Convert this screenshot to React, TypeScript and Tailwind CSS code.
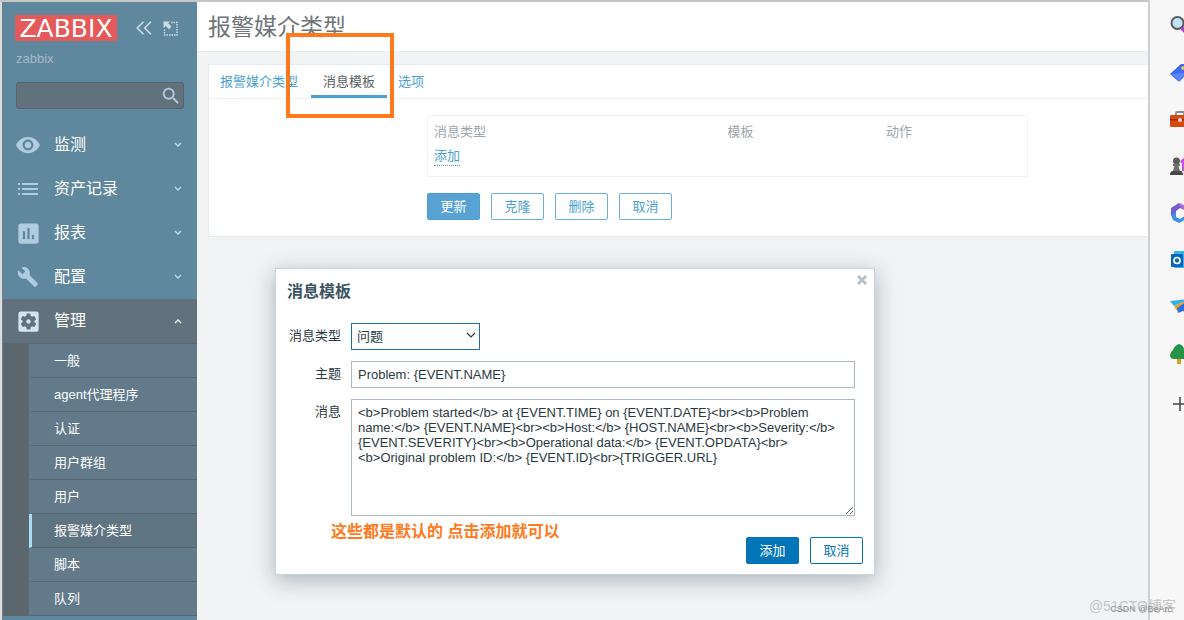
import type { ReactNode } from "react";
import {
  MdAssessment,
  MdBuild,
  MdSearch,
  MdSettingsApplications,
  MdVisibility,
} from "react-icons/md";

const ListIcon = () => (
  <svg width="20" height="12" viewBox="0 0 20 12" fill="currentColor">
    <path d="M0 0h2v2H0zM4 0h16v2H4zM0 5h2v2H0zM4 5h16v2H4zM0 10h2v2H0zM4 10h16v2H4z" />
  </svg>
);

const Chevron = ({ up = false }: { up?: boolean }) => (
  <svg
    width="8"
    height="6"
    viewBox="0 0 8 6"
    fill="none"
    stroke="currentColor"
    strokeWidth="1.3"
  >
    <path d={up ? "M1 5l3-3 3 3" : "M1 1l3 3 3-3"} />
  </svg>
);

const menu = [
  { label: "监测", icon: <MdVisibility size={26} /> },
  { label: "资产记录", icon: <ListIcon /> },
  { label: "报表", icon: <MdAssessment size={27} /> },
  { label: "配置", icon: <MdBuild size={22} /> },
];

const subMenu = [
  "一般",
  "agent代理程序",
  "认证",
  "用户群组",
  "用户",
  "报警媒介类型",
  "脚本",
  "队列",
];

const MenuButton = ({
  label,
  icon,
  open = false,
}: {
  label: string;
  icon: ReactNode;
  open?: boolean;
}) => (
  <button
    aria-expanded={open}
    className={`flex h-11 w-full items-center pr-[15px] pl-[11px] text-base text-white ${
      open ? "bg-[#61727d]" : ""
    }`}
  >
    <span
      className={`flex w-7 justify-center ${
        open ? "text-[#d3e5f1]" : "text-[#b0cde0]"
      }`}
    >
      {icon}
    </span>
    <span className="ml-3 flex-1 text-left">{label}</span>
    <span className={open ? "text-white" : "text-[#c5dae8]"}>
      <Chevron up={open} />
    </span>
  </button>
);

const Sidebar = () => (
  <aside className="w-[195px] shrink-0 border-l border-[#6b7f8a] bg-[#5f879d]">
    <div className="flex items-center px-3 pt-[13px] pr-[19px]">
      <a
        href="#"
        className="flex h-[26px] w-[102px] items-center justify-center bg-[#e45959] font-['DejaVu_Sans'] text-[25px] leading-none text-white"
      >
        ZABBIX
      </a>
      <button aria-label="收起" className="ml-auto text-[#c9dde9]">
        <svg
          width="16"
          height="14"
          viewBox="0 0 16 14"
          fill="none"
          stroke="currentColor"
          strokeWidth="1.6"
        >
          <path d="M7.500 .8L1.200 7l6.300 6.200M15 .8L8.700 7l6.300 6.200" />
        </svg>
      </button>
      <button aria-label="隐藏" className="ml-[11px] text-[#c9dde9]">
        <svg width="15" height="15" viewBox="0 0 15 15" fill="none">
          <path
            d="M8 1.500h6v12.500H1.500V8"
            stroke="currentColor"
            strokeWidth="1.400"
            strokeDasharray="1.500 1"
          />
          <path
            d="M.5 .5h6.500L5.200 2.300l3.300 3.300-2.600 2.600-3.300-3.300L.5 7z"
            fill="currentColor"
          />
        </svg>
      </button>
    </div>
    <p className="mt-[9px] px-[13px] text-[13px] leading-[18px] text-[#a3bac7]">
      zabbix
    </p>
    <form className="mx-[13px] mt-[14px] flex h-[27px] items-center rounded-[3px] border border-[#566570] bg-[#61727d] pr-px">
      <input aria-label="搜索" className="h-full min-w-0 flex-1 px-2 text-white" />
      <button type="button" aria-label="搜索" className="text-[#b0cde0]">
        <MdSearch size={22} />
      </button>
    </form>
    <nav className="mt-[14px]">
      {menu.map((m) => (
        <MenuButton key={m.label} label={m.label} icon={m.icon} />
      ))}
      <MenuButton
        label="管理"
        icon={<MdSettingsApplications size={27} />}
        open
      />
      <ul className="border-t border-[#596a76] bg-[#5b666d] pl-[26px] text-[13px] text-white">
        {subMenu.map((s) => (
          <li key={s}>
            <a
              href="#"
              className={`flex h-[34px] items-center border-b border-l-3 border-b-[#566772] pl-[22px] ${
                s === "报警媒介类型"
                  ? "border-l-[#a9dcf7] bg-[#5f7481]"
                  : "border-l-[#627a8a] bg-[#627a8a]"
              }`}
            >
              {s}
            </a>
          </li>
        ))}
      </ul>
    </nav>
  </aside>
);

const buttonBase =
  "h-[27px] min-w-[53px] rounded-[2px] border px-3 text-[13px] leading-none";

const MediaTypes = () => (
  <main className="min-w-0 flex-1 bg-[#f1f3f5]">
    <header className="h-[50px] border-b border-[#e6ebee] bg-white pl-[11px]">
      <h1 className="text-[23px] leading-[51px] text-[#6e7478]">
        报警媒介类型
      </h1>
    </header>
    <section className="mt-3 ml-[11px] border border-r-0 border-[#e6ebee] bg-white pb-4">
      <div className="flex h-[34px] items-stretch gap-px border-b border-[#eef1f3] text-[13px] text-[#4c9fd2]">
        <button className="pr-3 pl-[11px]">报警媒介类型</button>
        <button className="border-b-3 border-[#4c9fd2] px-3 pt-[3px] text-[#5b6064]">
          消息模板
        </button>
        <button className="px-[10px]">选项</button>
      </div>
      <div className="mt-4 ml-[218px] max-w-[601px]">
        <div className="border border-[#f0f2f3] px-[6px] pt-1 pb-2">
          <table className="w-full table-fixed text-left text-[13px]">
            <thead>
              <tr className="h-6 text-[#9ba6ad]">
                <th className="w-1/2 font-normal">消息类型</th>
                <th className="w-[27%] font-normal">模板</th>
                <th className="font-normal">动作</th>
              </tr>
            </thead>
            <tbody>
              <tr className="h-6">
                <td colSpan={3}>
                  <button className="border-b border-dotted border-[#4c9fd2] leading-[18px] text-[#4c9fd2]">
                    添加
                  </button>
                </td>
              </tr>
            </tbody>
          </table>
        </div>
        <div className="mt-4 flex gap-[11px]">
          <button
            className={`${buttonBase} border-[#4c9fd2] bg-[#58a3d3] text-white`}
          >
            更新
          </button>
          {["克隆", "删除", "取消"].map((b) => (
            <button
              key={b}
              className={`${buttonBase} border-[#6aaed8] bg-white text-[#4c9fd2]`}
            >
              {b}
            </button>
          ))}
        </div>
      </div>
    </section>
  </main>
);

const message =
  "<b>Problem started</b> at {EVENT.TIME} on {EVENT.DATE}<br><b>Problem name:</b> {EVENT.NAME}<br><b>Host:</b> {HOST.NAME}<br><b>Severity:</b> {EVENT.SEVERITY}<br><b>Operational data:</b> {EVENT.OPDATA}<br><b>Original problem ID:</b> {EVENT.ID}<br>{TRIGGER.URL}";

const TemplateDialog = () => (
  <div
    role="dialog"
    aria-labelledby="dialog-title"
    className="relative w-[600px] border border-[#c9d3d8] bg-white px-[11px] pt-[11px] pb-[10px] text-[#2b3a42] shadow-[0_5px_20px_rgba(60,85,99,0.4)]"
  >
    <button
      aria-label="关闭"
      className="absolute top-[6px] right-[7px] text-[#b3c2ca]"
    >
      <svg
        width="10"
        height="10"
        viewBox="0 0 10 10"
        stroke="currentColor"
        strokeWidth="3"
      >
        <path d="M1 1l8 8M9 1L1 9" />
      </svg>
    </button>
    <h2
      id="dialog-title"
      className="text-base leading-6 font-bold text-[#3c5563]"
    >
      消息模板
    </h2>
    <form className="mt-[19px] mr-2 grid grid-cols-[54px_1fr] gap-x-[10px] gap-y-[11px] text-[13px]">
      <label htmlFor="type" className="text-right leading-[25px]">
        消息类型
      </label>
      <div className="relative w-[129px]">
        <select
          id="type"
          className="h-[27px] w-full appearance-none border border-[#1f6fa3] bg-white pl-[5px]"
        >
          <option>问题</option>
        </select>
        <svg
          className="pointer-events-none absolute top-[9px] right-1"
          width="10"
          height="7"
          viewBox="0 0 10 7"
          fill="none"
          stroke="#2b3a42"
          strokeWidth="1.2"
        >
          <path d="M1 1l4 4 4-4" />
        </svg>
      </div>
      <label htmlFor="subject" className="text-right leading-[25px]">
        主题
      </label>
      <input
        id="subject"
        defaultValue="Problem: {EVENT.NAME}"
        className="h-[27px] border border-[#acbbc2] px-[6px]"
      />
      <label htmlFor="message" className="text-right leading-[25px]">
        消息
      </label>
      <textarea
        id="message"
        defaultValue={message}
        className="h-[117px] resize border border-[#acbbc2] py-[5px] pr-[10px] pl-[6px] leading-[15px]"
      />
    </form>
    <p className="mt-1 ml-11 text-base leading-6 font-bold text-[#ff7a1c]">
      这些都是默认的 点击添加就可以
    </p>
    <div className="-mt-[7px] flex justify-end gap-[11px]">
      <button className={`${buttonBase} border-[#0275b8] bg-[#0275b8] text-white`}>
        添加
      </button>
      <button
        className={`${buttonBase} border-[#0275b8] bg-white text-[#0275b8]`}
      >
        取消
      </button>
    </div>
  </div>
);

// Icons are wider than the bar, the window edge cuts them off.
const edgeIcons = [
  <>
    <path d="M12 13l7 7" stroke="#b13be8" strokeWidth="4" />
    <circle cx="7.500" cy="8" r="6" fill="#bfe4fa" stroke="#5b5b5b" strokeWidth="2" />
  </>,
  <>
    <path d="M1 11L11 2h8v8l-9 9q-1 1-2 0l-7-6q-1-1 0-2z" fill="#3f6df2" />
    <path d="M1 12l8 7 9-9-4 1z" fill="#5a86ff" />
    <circle cx="13" cy="6" r="1.800" fill="#ffc83d" />
  </>,
  <>
    <path d="M6 6V4q0-1 1-1h7v3" fill="none" stroke="#8a8a8a" strokeWidth="1.800" />
    <rect x="0" y="6" width="20" height="12" rx="1" fill="#d6490f" />
    <path d="M0 10h20v1.500H0z" fill="#9c2c06" />
    <rect x="8" y="9" width="4" height="4" rx="2" fill="#d9d9d9" />
  </>,
  <>
    <path d="M12 15V8l-2-3 5-4v14z" fill="#c352f0" />
    <circle cx="6.500" cy="5" r="3.500" fill="#5c5c5c" />
    <path d="M3 8h7v2H8.500l1.500 5H3l1.500-5H3z" fill="#6e6e6e" />
    <path d="M0 19q0-4 3-4h7q3 0 3 4z" fill="#474747" />
  </>,
  <>
    <path d="M9 0l8 4v4l-7-3-4 3v7l-5-3V5z" fill="#6f5fd0" />
    <path d="M1 12l5-3v5l4 2 8-5v4l-9 5-6-3z" fill="#3f8ee8" />
    <path d="M9 0l8 4v4l-7-4z" fill="#b06ae0" />
  </>,
  <>
    <rect x="4" y="1" width="16" height="17" rx="1" fill="#35b3f0" />
    <rect x="1" y="4" width="12" height="13" rx="1" fill="#0a64b8" />
    <circle cx="7" cy="10.500" r="3" fill="none" stroke="#fff" strokeWidth="1.700" />
  </>,
  <>
    <path d="M0 4l20-2-16 7z" fill="#35b0ea" />
    <path d="M4 9l14-6-11 11z" fill="#f5a31c" />
    <path d="M7 11l13-9v15l-7-3-5 2z" fill="#2f6fe6" />
  </>,
  <>
    <rect x="7" y="14" width="4" height="6" fill="#e69a2a" />
    <path d="M9 0q4 1 5 5 4 2 4 6 0 4-4 4H4q-4 0-4-4 1-4 3-5 2-5 6-6z" fill="#259447" />
  </>,
];

const EdgeBar = () => (
  <aside className="flex w-9 shrink-0 flex-col overflow-hidden border-l-2 border-[#cfcfcf] bg-[#f7f7f7] pt-px pl-5">
    {edgeIcons.map((icon, i) => (
      <div key={i} className="flex h-[47px] items-center">
        <svg className="shrink-0" width="20" height="20" viewBox="0 0 20 20">
          {icon}
        </svg>
      </div>
    ))}
    <button aria-label="添加" className="mt-5 ml-[3px] text-[#444]">
      <svg
        width="14"
        height="14"
        viewBox="0 0 14 14"
        stroke="currentColor"
        strokeWidth="1.500"
      >
        <path d="M7 0v14M0 7h14" />
      </svg>
    </button>
  </aside>
);

export default function App() {
  return (
    <div className="relative flex min-h-screen flex-col overflow-hidden bg-[#dcdedd] font-['Liberation_Sans','Noto_Sans_CJK_SC',sans-serif]">
      <div className="flex flex-1">
        <div className="relative flex min-w-0 flex-1 border-t-2 border-[#c6c6c6] pl-[2px]">
          <Sidebar />
          <MediaTypes />
          <div className="absolute inset-x-0 top-[266px] flex justify-center pl-[2px]">
            <TemplateDialog />
          </div>
          <div className="pointer-events-none absolute top-[31px] left-[286px] h-[85px] w-[108px] border-4 border-[#ff7a1c]" />
        </div>
        <EdgeBar />
      </div>
      <p className="absolute right-2 bottom-1 text-sm text-[#c3c5c7]">
        @51CTO博客
      </p>
      <p className="absolute right-3 bottom-1 text-[9px] text-[#8d8f91]">
        CSDN @BeArc
      </p>
    </div>
  );
}
